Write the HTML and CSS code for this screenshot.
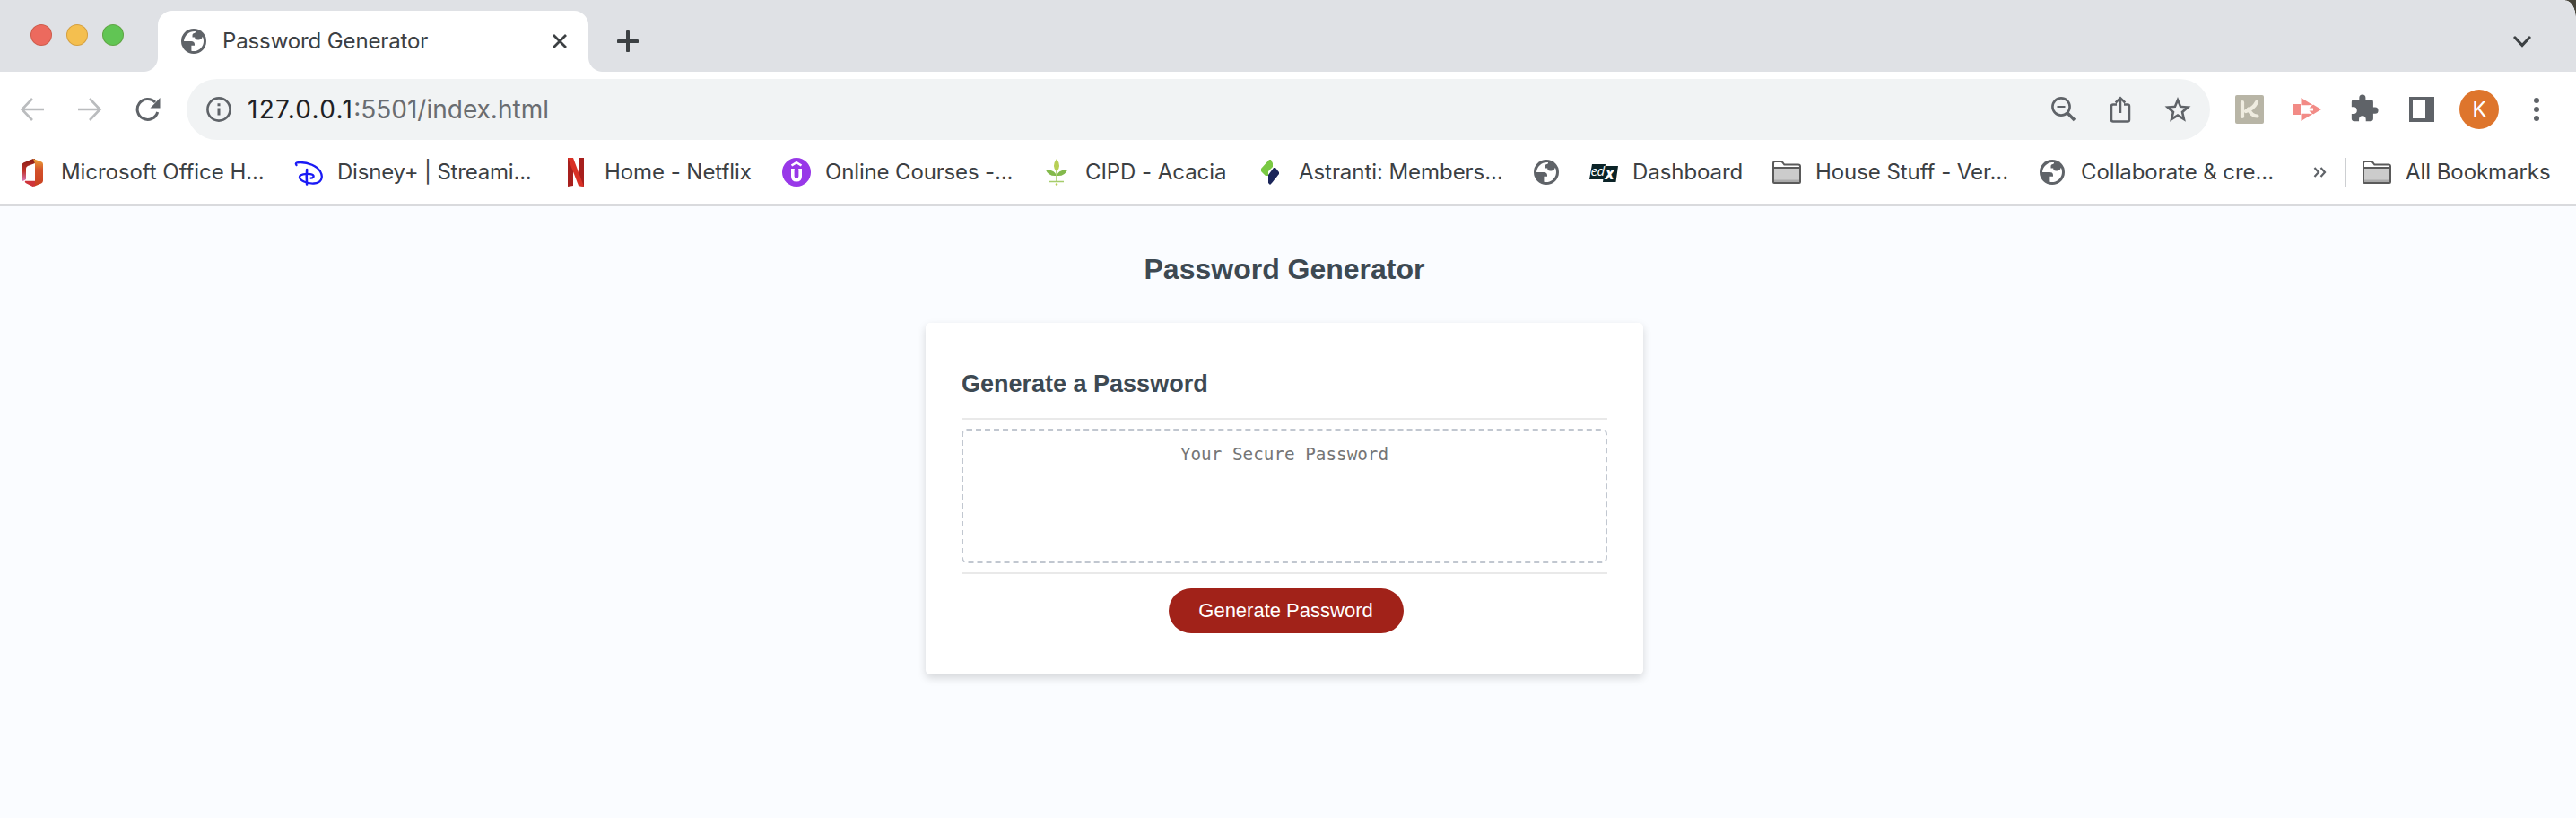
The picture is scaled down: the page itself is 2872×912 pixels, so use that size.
FILE: index.html
```
<!DOCTYPE html>
<html lang="en">
<head>
<meta charset="utf-8">
<title>Password Generator</title>
<link rel="stylesheet" href="styles.css">
</head>
<body>
<svg class="defs" width="0" height="0" aria-hidden="true">
  <symbol id="globe" viewBox="0 0 28 28">
    <circle cx="14" cy="14" r="14" fill="#5f6368"/>
    <path d="M16 3C9 2.500 3.500 7.500 3 14h8.200c2.500 0 3.800 1.300 3.800 3.400V18.800h-3.600V24.800C13 25.300 15.500 25.200 17.500 24.500 21.800 23 25 19 25 14c0-2-.4-3.600-1.200-5.200-.6 2.300-1.800 3.600-3.900 3.600h-1.700c-2 0-3-1-3-2.900h-2.700V7.700c0-1.700.8-2.300 2.200-2.600C15.600 4.800 16 4.200 16 3z" fill="#fff"/>
  </symbol>
  <symbol id="folder" viewBox="0 0 32 26">
    <path d="M1 24V3q0-2 2-2h6.500q1 0 2 1.200l1.800 2.300H29q2 0 2 2V24q0 1-1 1H2q-1 0-1-1z" fill="#fff" stroke="#5a5a5a" stroke-width="2"/>
    <path d="M2 8h28v16H2z" fill="#ccc"/><path d="M2 21.500h28V24H2z" fill="#aaa"/><path d="M1 8h30" stroke="#5a5a5a" stroke-width="2"/>
  </symbol>
</svg>

<header class="browser">
  <div class="tabstrip">
    <div class="lights"><i class="red"></i><i class="amber"></i><i class="green"></i></div>
    <div class="tab">
      <svg class="tab-icon" width="28" height="28"><use href="#globe"/></svg>
      <span class="tab-title">Password Generator</span>
      <svg class="tab-close" width="16" height="16" viewBox="0 0 16 16"><path d="M1 1l14 14M15 1L1 15" stroke="#3c4043" stroke-width="2.800"/></svg>
    </div>
    <svg class="new-tab" width="24" height="24" viewBox="0 0 24 24"><path d="M12 1.500v21M1.500 12h21" stroke="#3c4043" stroke-width="4" stroke-linecap="round"/></svg>
    <svg class="chevron" width="20" height="13" viewBox="0 0 20 13"><path d="M2 2l8 8.500L18 2" fill="none" stroke="#3c4043" stroke-width="3.200" stroke-linecap="round"/></svg>
    <i class="corner"></i>
  </div>

  <div class="toolbar">
    <svg class="back" width="28" height="28" viewBox="0 0 28 28" fill="none" stroke="#babcbe" stroke-width="2.600"><path d="M27 14H3M14 2L2.500 14 14 26"/></svg>
    <svg class="forward" width="28" height="28" viewBox="0 0 28 28" fill="none" stroke="#babcbe" stroke-width="2.600"><path d="M1 14h24M14 2l11.500 12L14 26"/></svg>
    <svg class="reload" width="28" height="28" viewBox="0 0 28 28"><path d="M24.700 17A11.500 11.500 0 1 1 22 6" fill="none" stroke="#5f6368" stroke-width="3"/><path d="M27.500 1v11.500H16.500z" fill="#5f6368"/></svg>
    <div class="omnibox">
      <svg width="28" height="28" viewBox="0 0 28 28"><circle cx="14" cy="14" r="12.600" fill="none" stroke="#5f6368" stroke-width="2.600"/><path d="M14 12.500v8M14 7.300v2.900" stroke="#5f6368" stroke-width="3"/></svg>
      <span class="url"><b>127.0.0.1</b>:5501/index.html</span>
      <svg class="act-zoom" width="28" height="28" viewBox="0 0 28 28" fill="none" stroke="#5f6368"><circle cx="11" cy="11" r="9.600" stroke-width="2.600"/><path d="M6.500 11h9" stroke-width="2"/><path d="M17.500 17.500l8.500 8.500" stroke-width="3.600"/></svg>
      <svg class="act-share" width="24" height="30" viewBox="0 0 24 30" fill="none" stroke="#5f6368" stroke-width="2.500"><path d="M8 9.500H4q-2 0-2 2v15q0 2 2 2h16q2 0 2-2v-15q0-2-2-2h-4M12 19V3M6.700 7.500L12 2.200l5.300 5.300"/></svg>
      <svg class="act-star" width="30" height="29" viewBox="0 0 30 29"><path fill="#5f6368" fill-rule="evenodd" d="M15 0l4 9.700 10.500.9-8 6.900 2.400 10.200L15 22.300l-8.900 5.400 2.400-10.200-8-6.900L11 9.700zM15 6.800l-2.200 5.300-5.700.5 4.300 3.800-1.300 5.600 4.900-3 4.900 3-1.300-5.600 4.300-3.800-5.700-.5z"/></svg>
    </div>
    <svg class="ext-k" width="32" height="32" viewBox="0 0 32 32"><rect width="32" height="32" rx="2" fill="#b8b5a6"/><path d="M8 8v16M24 8c-2.500 5-6 8-12 10M15 15.500c2 5 5 8 9.500 8" fill="none" stroke="#efece0" stroke-width="4.200" stroke-linecap="round"/></svg>
    <svg class="ext-red" width="32" height="28" viewBox="0 0 32 28"><path d="M0 8h9v12H0z" fill="#f28b86"/><path d="M9.500 1l13 8h-2l-3 .200H9.500zM9.500 27l13-8h-2l-3-.200H9.500z" fill="#f28b86"/><path d="M32 14l-9-5.500v11z" fill="#f28b86"/><path d="M22 9l-3.500 3.500h4.500v3h-4.500L22 19h1.500V9z" fill="#f28b86"/></svg>
    <svg class="ext-puzzle" width="34" height="34" viewBox="0 0 24 24"><path fill="#5f6368" d="M20.500 11H19V7a2 2 0 0 0-2-2h-4V3.500a2.500 2.500 0 0 0-5 0V5H4a2 2 0 0 0-2 2v3.800h1.500a2.700 2.700 0 0 1 0 5.400H2V20a2 2 0 0 0 2 2h3.800v-1.500a2.700 2.700 0 0 1 5.400 0V22H17a2 2 0 0 0 2-2v-4h1.500a2.500 2.500 0 0 0 0-5z"/></svg>
    <svg class="panel" width="28" height="28" viewBox="0 0 28 28"><path fill="#5f6368" fill-rule="evenodd" d="M0 0h28v28H0zM4 4v20h14V4z"/></svg>
    <div class="avatar">K</div>
    <svg class="dots" width="6" height="28" viewBox="0 0 6 28" fill="#5f6368"><circle cx="3" cy="4" r="3"/><circle cx="3" cy="14" r="3"/><circle cx="3" cy="24" r="3"/></svg>
  </div>

  <nav class="bookmarks">
    <a class="bm b1"><svg width="24" height="31" viewBox="0 0 24 31"><defs><linearGradient id="o1" x2="0" y2="1"><stop stop-color="#861a12"/><stop offset=".55" stop-color="#c0342c"/><stop offset="1" stop-color="#d977b4"/></linearGradient><linearGradient id="o2" x2="0" y2="1"><stop stop-color="#eda83a"/><stop offset=".4" stop-color="#d3512a"/><stop offset="1" stop-color="#c94020"/></linearGradient></defs><path d="M13 0L2.500 4.300Q0 5.300 0 8v14.500q0 3 2.500 2L5 23V11q0-2 2-3l8-3V0z" fill="url(#o1)"/><path d="M13 0l9 3.200q2 .8 2 2.800v18.500q0 2-2 3L13.500 31l1.500-5V5.500z" fill="url(#o2)"/><path d="M4 24.800h11V29q0 2-2.500 2L5 27.200q-2-1.200-1-2.400z" fill="#cf343a"/></svg><span>Microsoft Office H...</span></a>
    <a class="bm b2"><svg width="32" height="32" viewBox="0 0 32 32" fill="none" stroke="#1a1af5" stroke-linecap="round"><path d="M2.500 8C.5 5.500 3.500 5 7 5c9 0 18 4 22 10 4 7 1 13-7 13.500C14 29 6 25 6 21.500c0-3 7-4 12-3.300 5 .6 4.500 4 .5 4.500" stroke-width="2.300"/><path d="M14.200 13c-.6 5-.6 10-.1 16.500" stroke-width="2.600"/></svg><span>Disney+ | Streami...</span></a>
    <a class="bm b3"><svg width="18" height="32" viewBox="0 0 18 32"><path d="M0 0h6v31l-6 1zM12 0h6v32l-6-1z" fill="#a71f1d"/><path d="M0 0h6l12 32-6-1z" fill="#d93025"/></svg><span>Home - Netflix</span></a>
    <a class="bm b4"><svg width="32" height="32" viewBox="0 0 32 32"><circle cx="16" cy="16" r="16" fill="#9838e8"/><path d="M10.500 8.500L16 5.200l5.500 3.300" fill="none" stroke="#fff" stroke-width="2.600"/><path d="M10 13h3.500M18.500 13H22" stroke="#fff" stroke-width="2"/><path d="M11.800 12v8.500q0 4.200 4.200 4.200t4.200-4.200V12" fill="none" stroke="#fff" stroke-width="3.600"/></svg><span>Online Courses -...</span></a>
    <a class="bm b5"><svg width="24" height="30" viewBox="0 0 24 30"><path d="M12 0q6 8 0 15-6-7 0-15z" fill="#b7cf55"/><path d="M12 19Q3 20 0 12.500q10-1 12 6.500zM12 19q9 1 12-6.500-10-1-12 6.500z" fill="#83b94c"/><path d="M12 14v11M4 25.500h16" stroke="#a5cc6b" stroke-width="1.500"/><circle cx="12" cy="28.500" r="1.300" fill="#b7cf55"/></svg><span>CIPD - Acacia</span></a>
    <a class="bm b6"><svg width="20" height="28" viewBox="0 0 20 28"><path d="M9 0h2l2 4v4l-5 5v5H5l-5-5v-3z" fill="#7ac943"/><path d="M14 9h2l4 5v2l-8 10-2 2-2-2v-9z" fill="#1b2559"/></svg><span>Astranti: Members...</span></a>
    <a class="bm b7"><svg width="28" height="28"><use href="#globe"/></svg></a>
    <a class="bm b8"><svg class="edx" width="32" height="22" viewBox="0 0 32 22"><path d="M3 1h15l-.3 2H32l-2.500 18H15l.4-3H0z" fill="#0b2327"/><text x="1.500" y="14" class="edx-text">ed</text><text x="17.500" y="18" class="edx-text edx-x">x</text></svg><span>Dashboard</span></a>
    <a class="bm b9"><svg width="32" height="26"><use href="#folder"/></svg><span>House Stuff - Ver...</span></a>
    <a class="bm b10"><svg width="28" height="28"><use href="#globe"/></svg><span>Collaborate &amp; cre...</span></a>
    <svg class="more" width="15" height="12" viewBox="0 0 15 12"><path d="M1.500 1L6 6l-4.500 5M8.500 1L13 6l-4.500 5" fill="none" stroke="#5f6368" stroke-width="2.200"/></svg>
    <i class="divider"></i>
    <a class="bm b11"><svg width="32" height="26"><use href="#folder"/></svg><span>All Bookmarks</span></a>
  </nav>
</header>

<main class="page">
  <h1>Password Generator</h1>
  <section class="card">
    <h2>Generate a Password</h2>
    <div class="card-body"><div class="password">Your Secure Password</div></div>
    <button class="btn">Generate Password</button>
  </section>
</main>
</body>
</html>
```
FILE: styles.css
```
* { box-sizing: border-box; }
body { margin: 0; width: 2872px; height: 912px; overflow: hidden; background: #fafcff; font-family: Inter, "Noto Sans", sans-serif; }
svg { display: block; flex: none; }
.defs { position: absolute; }

.browser { height: 230px; background: #fff; border-bottom: 2px solid #d9dadd; }

.tabstrip { position: relative; display: flex; align-items: center; height: 80px; background: #dfe1e5; }
.lights { display: flex; gap: 16px; margin: 0 38px 2px 34px; }
.lights i { width: 24px; height: 24px; border-radius: 50%; border: 1px solid rgba(90, 40, 0, .2); }
.red { background: #ec6a5e; }
.amber { background: #f4bf4f; }
.green { background: #61c554; }
.tab { position: relative; display: flex; align-items: center; align-self: flex-end; width: 480px; height: 68px; padding: 0 24px 0 26px; background: #fff; border-radius: 16px 16px 0 0; }
.tab::before, .tab::after { content: ""; position: absolute; bottom: 0; width: 16px; height: 16px; }
.tab::before { left: -16px; background: radial-gradient(circle at 0 0, #dfe1e5 15.500px, #fff 16.500px); }
.tab::after { right: -16px; background: radial-gradient(circle at 100% 0, #dfe1e5 15.500px, #fff 16.500px); }
.tab-title { margin: 0 0 1px 18px; font-size: 24px; letter-spacing: -.12px; color: #3c4043; white-space: nowrap; }
.tab-close { margin-left: auto; }
.new-tab { margin: 12px 0 0 32px; }
.chevron { margin: 13px 50px 0 auto; }
.corner { position: absolute; right: 0; top: 0; width: 12px; height: 20px; background: radial-gradient(ellipse 12px 20px at 0 100%, #dfe1e5 96%, #46443a 100%); }

.toolbar { display: flex; align-items: center; height: 84px; padding-left: 22px; }
.forward { margin-left: 36px; }
.reload { margin-left: 37px; }
.omnibox { display: flex; align-items: center; width: 2256px; height: 68px; margin-left: 29px; padding: 0 21px 0 22px; border-radius: 34px; background: #f1f3f4; }
.url { margin-left: 18px; font-size: 28px; color: #6a6d71; white-space: nowrap; }
.url b { font-weight: 400; letter-spacing: 1.300px; color: #202124; }
.act-zoom { margin: 0 0 0 auto; }
.act-share { margin-left: 37px; }
.act-star { margin-left: 37px; }
.ext-k { margin-left: 28px; }
.ext-red { margin-left: 32px; }
.ext-puzzle { margin: 0 -2px 2px 31px; }
.panel { margin-left: 35px; }
.avatar { display: flex; align-items: center; justify-content: center; width: 44px; height: 44px; margin-left: 28px; border-radius: 50%; background: #de752c; color: #fff; font: 24px Roboto, sans-serif; }
.dots { margin-left: 39px; }

.bookmarks { display: flex; align-items: center; height: 56px; padding-left: 24px; font-size: 24px; letter-spacing: -.06px; color: #3c4043; }
.bm { display: flex; align-items: center; flex: none; white-space: nowrap; }
.bm span { padding-bottom: 1px; }
.b1 { width: 304px; gap: 20px; }
.b2 { width: 305px; gap: 16px; letter-spacing: -.2px; }
.b3 { width: 239px; gap: 23px; }
.b4 { width: 294px; gap: 16px; letter-spacing: -.15px; }
.b5 { width: 240px; gap: 20px; }
.b6 { width: 304px; gap: 22px; }
.b7 { width: 62px; }
.b8 { width: 204px; gap: 16px; }
.b9 { width: 298px; gap: 16px; }
.b10 { width: 305px; gap: 18px; }
.b11 { gap: 16px; }
.edx { margin-top: 2px; }
.edx-text { font: italic 15px "Open Sans", sans-serif; letter-spacing: -.5px; fill: #fff; }
.edx-x { font-weight: 700; font-size: 19px; }
.divider { width: 2px; height: 32px; margin: 0 18px 0 20px; background: #cdcfd2; }

.page { font-family: "Liberation Sans", Arial, sans-serif; color: #3d4952; }
h1, h2 { margin: 0; font-weight: 700; white-space: nowrap; }
h1 { padding-top: 52px; font-size: 32px; line-height: 37px; text-align: center; width: 2864px; }
.card { width: 800px; height: 392px; margin: 41px 0 0 1032px; padding: 52px 40px 0; border-radius: 5px; background: #fff; box-shadow: 0 4px 10px rgba(0, 0, 0, .15); display: flex; flex-direction: column; align-items: center; }
h2 { align-self: flex-start; font-size: 27px; line-height: 32px; }
.card-body { width: 720px; height: 174px; margin-top: 22px; padding: 10px 0; border: 2px solid #e9e9e9; border-width: 2px 0; }
.password { height: 150px; padding-top: 15px; border: 2px dashed #c1c7d0; border-radius: 6px; text-align: center; font: 19.300px/24px "DejaVu Sans Mono", monospace; color: #757575; }
.btn { width: 262px; height: 50px; margin: 16px 0 0 3px; padding: 0; border: 0; border-radius: 25px; background: #a12219; color: #fff; font: 22px "Liberation Sans", Arial, sans-serif; }
```
